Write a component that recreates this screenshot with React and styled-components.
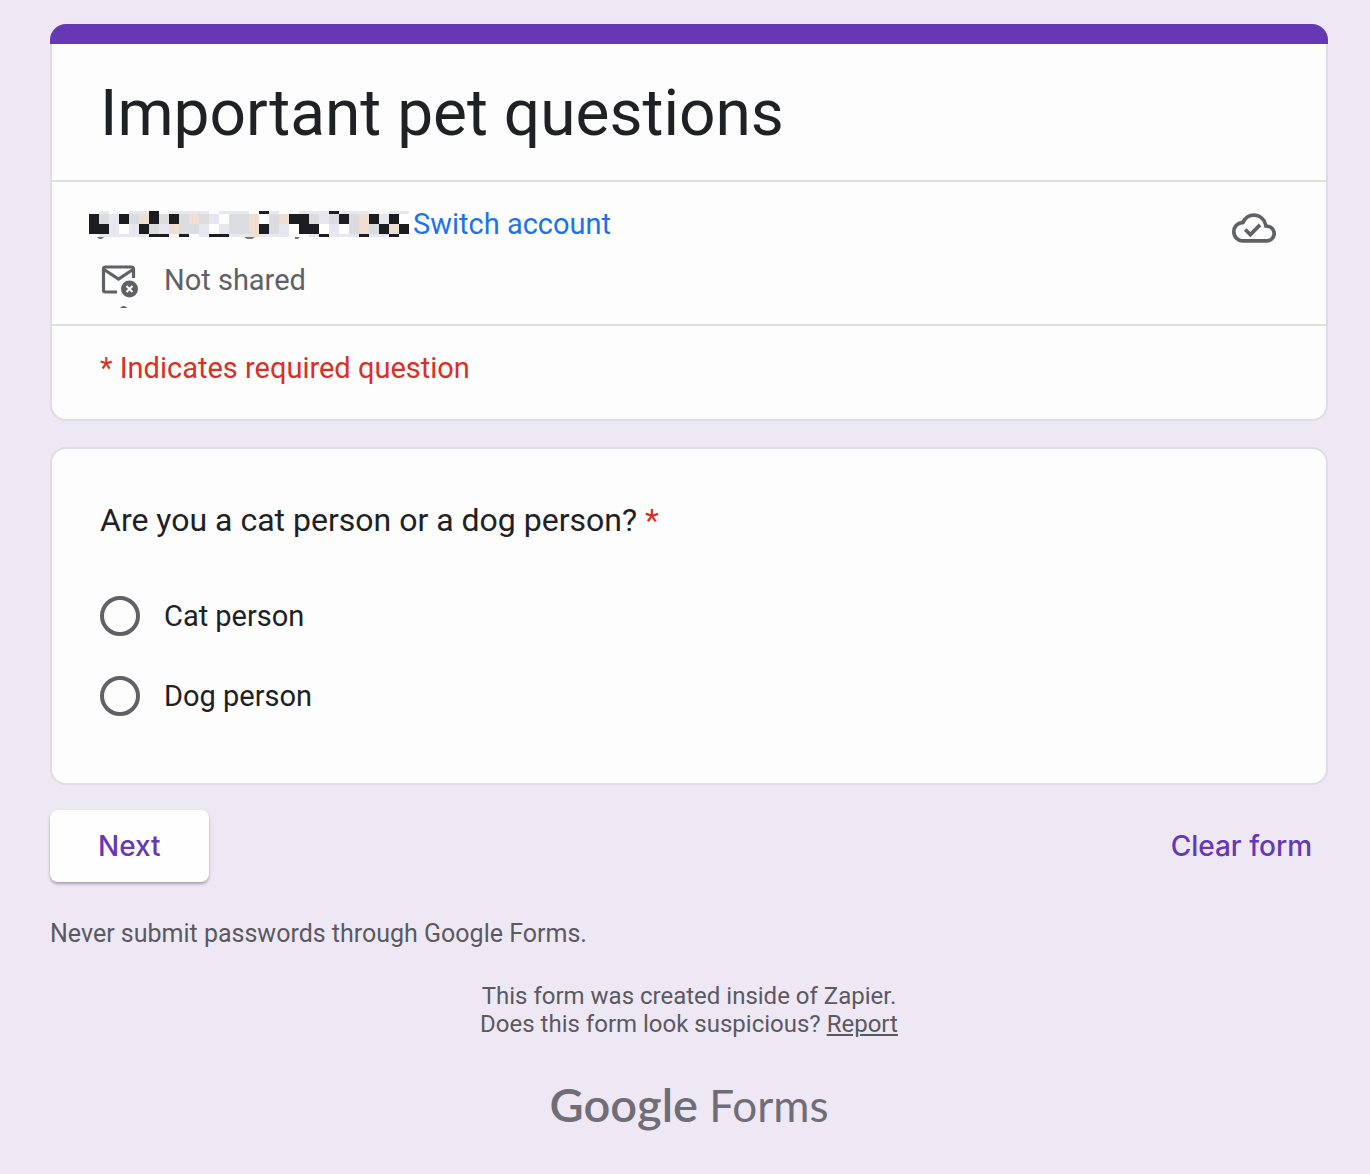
import React from 'react'
import styled, { createGlobalStyle } from 'styled-components';

const MOSAIC_ROWS = [
    { y: 2, h: 3, cells: '.l..llX.llll.lll.Xl..lllXlll..ll' },
    { y: 5, h: 10, cells: 'XglXgpXgXgpglwggpwgpXXglgXgpXlXw' },
    { y: 15, h: 10, cells: 'XXlwlXglpgglwlggpXglwXXwlwgpgXpX' },
    { y: 25, h: 3, cells: '.lllllXX.X.lXXllplll..lXlllXllX.' },
];

const MOSAIC_COLORS = {
    X: '#1c1d20',
    g: '#dadce0',
    l: '#e8e6f0',
    p: '#f0dfd0',
    w: '#ffffff',
};

function App() {
    return (
        <Page>
            <GlobalStyle/>
            <HeaderCard>
                <Stripe/>
                <TitleArea>
                    <Title>Important pet questions</Title>
                </TitleArea>
                <Account>
                    <AccountInfo>
                        <AccountLine>
                            <Mosaic/>
                            <SwitchLink href="#">Switch account</SwitchLink>
                        </AccountLine>
                        <SharedLine>
                            <MailOffIcon/>
                            Not shared
                        </SharedLine>
                    </AccountInfo>
                    <CloudDoneIcon/>
                </Account>
                <RequiredNote>* Indicates required question</RequiredNote>
            </HeaderCard>
            <QuestionCard>
                <Question>
                    Are you a cat person or a dog person? <Star>*</Star>
                </Question>
                <Option>
                    <Radio type="radio" name="person" value="cat"/>
                    Cat person
                </Option>
                <Option>
                    <Radio type="radio" name="person" value="dog"/>
                    Dog person
                </Option>
            </QuestionCard>
            <Actions>
                <NextButton type="button">Next</NextButton>
                <ClearButton type="button">Clear form</ClearButton>
            </Actions>
            <Warning>Never submit passwords through Google Forms.</Warning>
            <Footer>
                <div>This form was created inside of Zapier.</div>
                <div>Does this form look suspicious? <ReportLink href="#">Report</ReportLink></div>
            </Footer>
            <Logo href="#">
                <LogoGoogle>Google</LogoGoogle> Forms
            </Logo>
        </Page>
    )
}

function Mosaic() {
    return (
        <MosaicSvg width="320" height="30" viewBox="0 0 320 30" aria-hidden="true">
            {MOSAIC_ROWS.map((row) => row.cells.split('').map((cell, i) => (
                MOSAIC_COLORS[cell] && (
                    <rect key={`${row.y}-${i}`} x={i * 10} y={row.y} width="10" height={row.h} fill={MOSAIC_COLORS[cell]}/>
                )
            )))}
            <path d="M8 28H15L13 30H10ZM155 28H166L163 30H158ZM206 28H211L209 30H206Z" fill="#77787b"/>
        </MosaicSvg>
    )
}

function MailOffIcon() {
    return (
        <svg width="40" height="48" viewBox="0 0 40 48" fill="none" aria-hidden="true">
            <path d="M17 32H5.500Q3.500 32 3.500 30V9Q3.500 7 5.500 7H31.500Q33.500 7 33.500 9V18" stroke="#5f6164" strokeWidth="3.200"/>
            <path d="M4 9.500L18.500 19L33 9.500" stroke="#5f6164" strokeWidth="3.200"/>
            <circle cx="29.500" cy="29" r="8.500" fill="#5f6164"/>
            <path d="M26.500 26L32.500 32M32.500 26L26.500 32" stroke="#fff" strokeWidth="2"/>
            <path d="M20 48Q23.500 44 27.500 48Z" fill="#5f6164"/>
        </svg>
    )
}

function CloudDoneIcon() {
    return (
        <CloudSvg width="44" height="44" viewBox="0 0 24 24" fill="#5f6164" aria-hidden="true">
            <path d="M19.350 10.040A7.490 7.490 0 0 0 12 4C9.110 4 6.600 5.640 5.350 8.040A5.994 5.994 0 0 0 0 14c0 3.310 2.690 6 6 6h13c2.760 0 5-2.240 5-5 0-2.640-2.050-4.780-4.650-4.960zM19 18H6c-2.210 0-4-1.790-4-4 0-2.050 1.530-3.760 3.560-3.970l1.070-.110.500-.950A5.469 5.469 0 0 1 12 6c2.620 0 4.880 1.860 5.390 4.430l.300 1.500 1.530.110A2.980 2.980 0 0 1 22 15c0 1.650-1.350 3-3 3zm-9-3.820l-2.090-2.090L6.500 13.500 10 17l6.010-6.010-1.410-1.410z"/>
        </CloudSvg>
    )
}

export default App

const GlobalStyle = createGlobalStyle`
    * {
        box-sizing: border-box;
    }
    body {
        margin: 0;
        background: #eee8f5;
        color: #202124;
        font-family: Roboto, sans-serif;
        font-size: 29px;
        line-height: 40px;
    }
`

const Page = styled.main`
    padding: 24px 42px 32px 50px;
`

const Card = styled.section`
    background: #fdfdfd;
    border: 2px solid #dfdce5;
    border-radius: 16px;
`

const HeaderCard = styled(Card)`
    border-top: 0;
`

const Stripe = styled.div`
    height: 20px;
    margin: 0 -2px;
    border-radius: 16px 16px 0 0;
    background: #6638b5;
`

const TitleArea = styled.div`
    padding: 30px 48px 26px;
    border-bottom: 2px solid #dddee0;
`

const Title = styled.h1`
    margin: 0;
    font-size: 64px;
    font-weight: 400;
    line-height: 80px;
`

const Account = styled.div`
    display: flex;
    align-items: flex-start;
    justify-content: space-between;
    padding: 22px 50px 16px 37px;
    border-bottom: 2px solid #dddee0;
`

const AccountInfo = styled.div`
    display: flex;
    flex-direction: column;
    gap: 16px;
`

const AccountLine = styled.div`
    display: flex;
    align-items: center;
    gap: 4px;
`

const MosaicSvg = styled.svg`
    display: block;
`

const SwitchLink = styled.a`
    color: #1a73e8;
    text-decoration: none;
`

const SharedLine = styled.div`
    display: flex;
    align-items: flex-start;
    gap: 24px;
    padding-left: 11px;
    color: #5f6164;
`

const CloudSvg = styled.svg`
    margin-top: 2px;
`

const RequiredNote = styled.div`
    padding: 22px 48px 31px;
    color: #d93025;
`

const QuestionCard = styled(Card)`
    margin-top: 26px;
    padding: 47px 48px 47px;
`

const Question = styled.h2`
    margin: 0 0 32px;
    font-size: 32px;
    font-weight: 400;
    line-height: 48px;
`

const Star = styled.span`
    color: #d93025;
`

const Option = styled.label`
    display: flex;
    align-items: center;
    gap: 24px;
    height: 80px;
`

const Radio = styled.input`
    appearance: none;
    width: 40px;
    height: 40px;
    margin: 0;
    border: 4px solid #5f6164;
    border-radius: 50%;
    &:checked {
        border-color: #6638b5;
        background: radial-gradient(#6638b5 50%, transparent 54%);
    }
`

const Actions = styled.div`
    display: flex;
    align-items: center;
    justify-content: space-between;
    margin-top: 25px;
`

const Button = styled.button`
    height: 72px;
    border: 0;
    border-radius: 8px;
    color: #6638b5;
    font-family: Inter, sans-serif;
    font-size: 28px;
    font-weight: 500;
    cursor: pointer;
`

const NextButton = styled(Button)`
    padding: 0 48px;
    background: #fefefe;
    box-shadow: 0 2px 3px rgba(60, 50, 80, 0.4);
`

const ClearButton = styled(Button)`
    padding: 0 16px;
    background: transparent;
`

const Warning = styled.div`
    margin-top: 36px;
    color: #5b5960;
    font-size: 25px;
    line-height: 32px;
`

const Footer = styled.footer`
    margin-top: 32px;
    color: #5b5960;
    font-size: 24px;
    line-height: 28px;
    text-align: center;
`

const ReportLink = styled.a`
    color: inherit;
`

const Logo = styled.a`
    display: block;
    margin-top: 36px;
    color: #706d76;
    font-family: Lato, sans-serif;
    font-size: 44px;
    line-height: 60px;
    text-align: center;
    text-decoration: none;
`

const LogoGoogle = styled.span`
    font-size: 47px;
    font-weight: 600;
`
